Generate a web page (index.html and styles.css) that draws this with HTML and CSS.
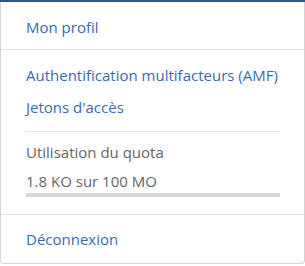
FILE: index.html
```html
<!DOCTYPE html>
<html lang="fr">
<head>
    <meta charset="UTF-8">
    <meta name="viewport" content="width=device-width, initial-scale=1.0">
    <title>Menu utilisateur</title>
    <link rel="stylesheet" href="styles.css">
</head>
<body>

    <div class="navbar-edge"></div>

    <div class="user-menu">
        <div class="menu-section first">
            <a class="menu-item" href="#">Mon profil</a>
        </div>

        <div class="menu-section middle">
            <a class="menu-item" href="#">Authentification multifacteurs (AMF)</a>
            <a class="menu-item" href="#">Jetons d'accès</a>

            <div class="inner-divider"></div>

            <div class="quota">
                <div class="quota-label">Utilisation du quota</div>
                <div class="quota-value">1.8 KO sur 100 MO</div>
                <div class="quota-bar"></div>
            </div>
        </div>

        <div class="menu-section last">
            <a class="menu-item" href="#">Déconnexion</a>
        </div>
    </div>

</body>
</html>
```

FILE: styles.css
```css
* {
    margin: 0;
    padding: 0;
    box-sizing: border-box;
}

body {
    background: #fff;
    font-family: 'Open Sans', 'Noto Sans', sans-serif;
    font-size: 15px;
    width: 305px;
}

.navbar-edge {
    height: 2px;
    background: #2b5597;
}

.user-menu {
    background: #fff;
    border: 1px solid #d4d4d4;
    border-top: none;
    border-radius: 0 0 4px 4px;
    height: 262px;
    display: flex;
    flex-direction: column;
}

.menu-section {
    border-bottom: 1px solid #e2e2e2;
}

.menu-section.last {
    border-bottom: none;
}

.menu-item {
    display: block;
    padding: 0 24px 0 25px;
    line-height: 32px;
    color: #3a6ab0;
    text-decoration: none;
    white-space: nowrap;
}

.menu-section.first {
    padding: 9px 0 6px;
}

.menu-section.last {
    padding: 8px 0 7px;
}

.menu-section.middle {
    padding: 9px 0 17px;
}

.inner-divider {
    height: 1px;
    background: #e6e6e6;
    margin: 8px 24px 0 25px;
}

.quota {
    padding: 9px 24px 0 25px;
    color: #666;
}

.quota-label,
.quota-value {
    line-height: 22px;
}

.quota-value {
    margin-top: 7px;
}

.quota-bar {
    height: 4px;
    background: #d5d9d9;
    margin-top: 1px;
}
```
